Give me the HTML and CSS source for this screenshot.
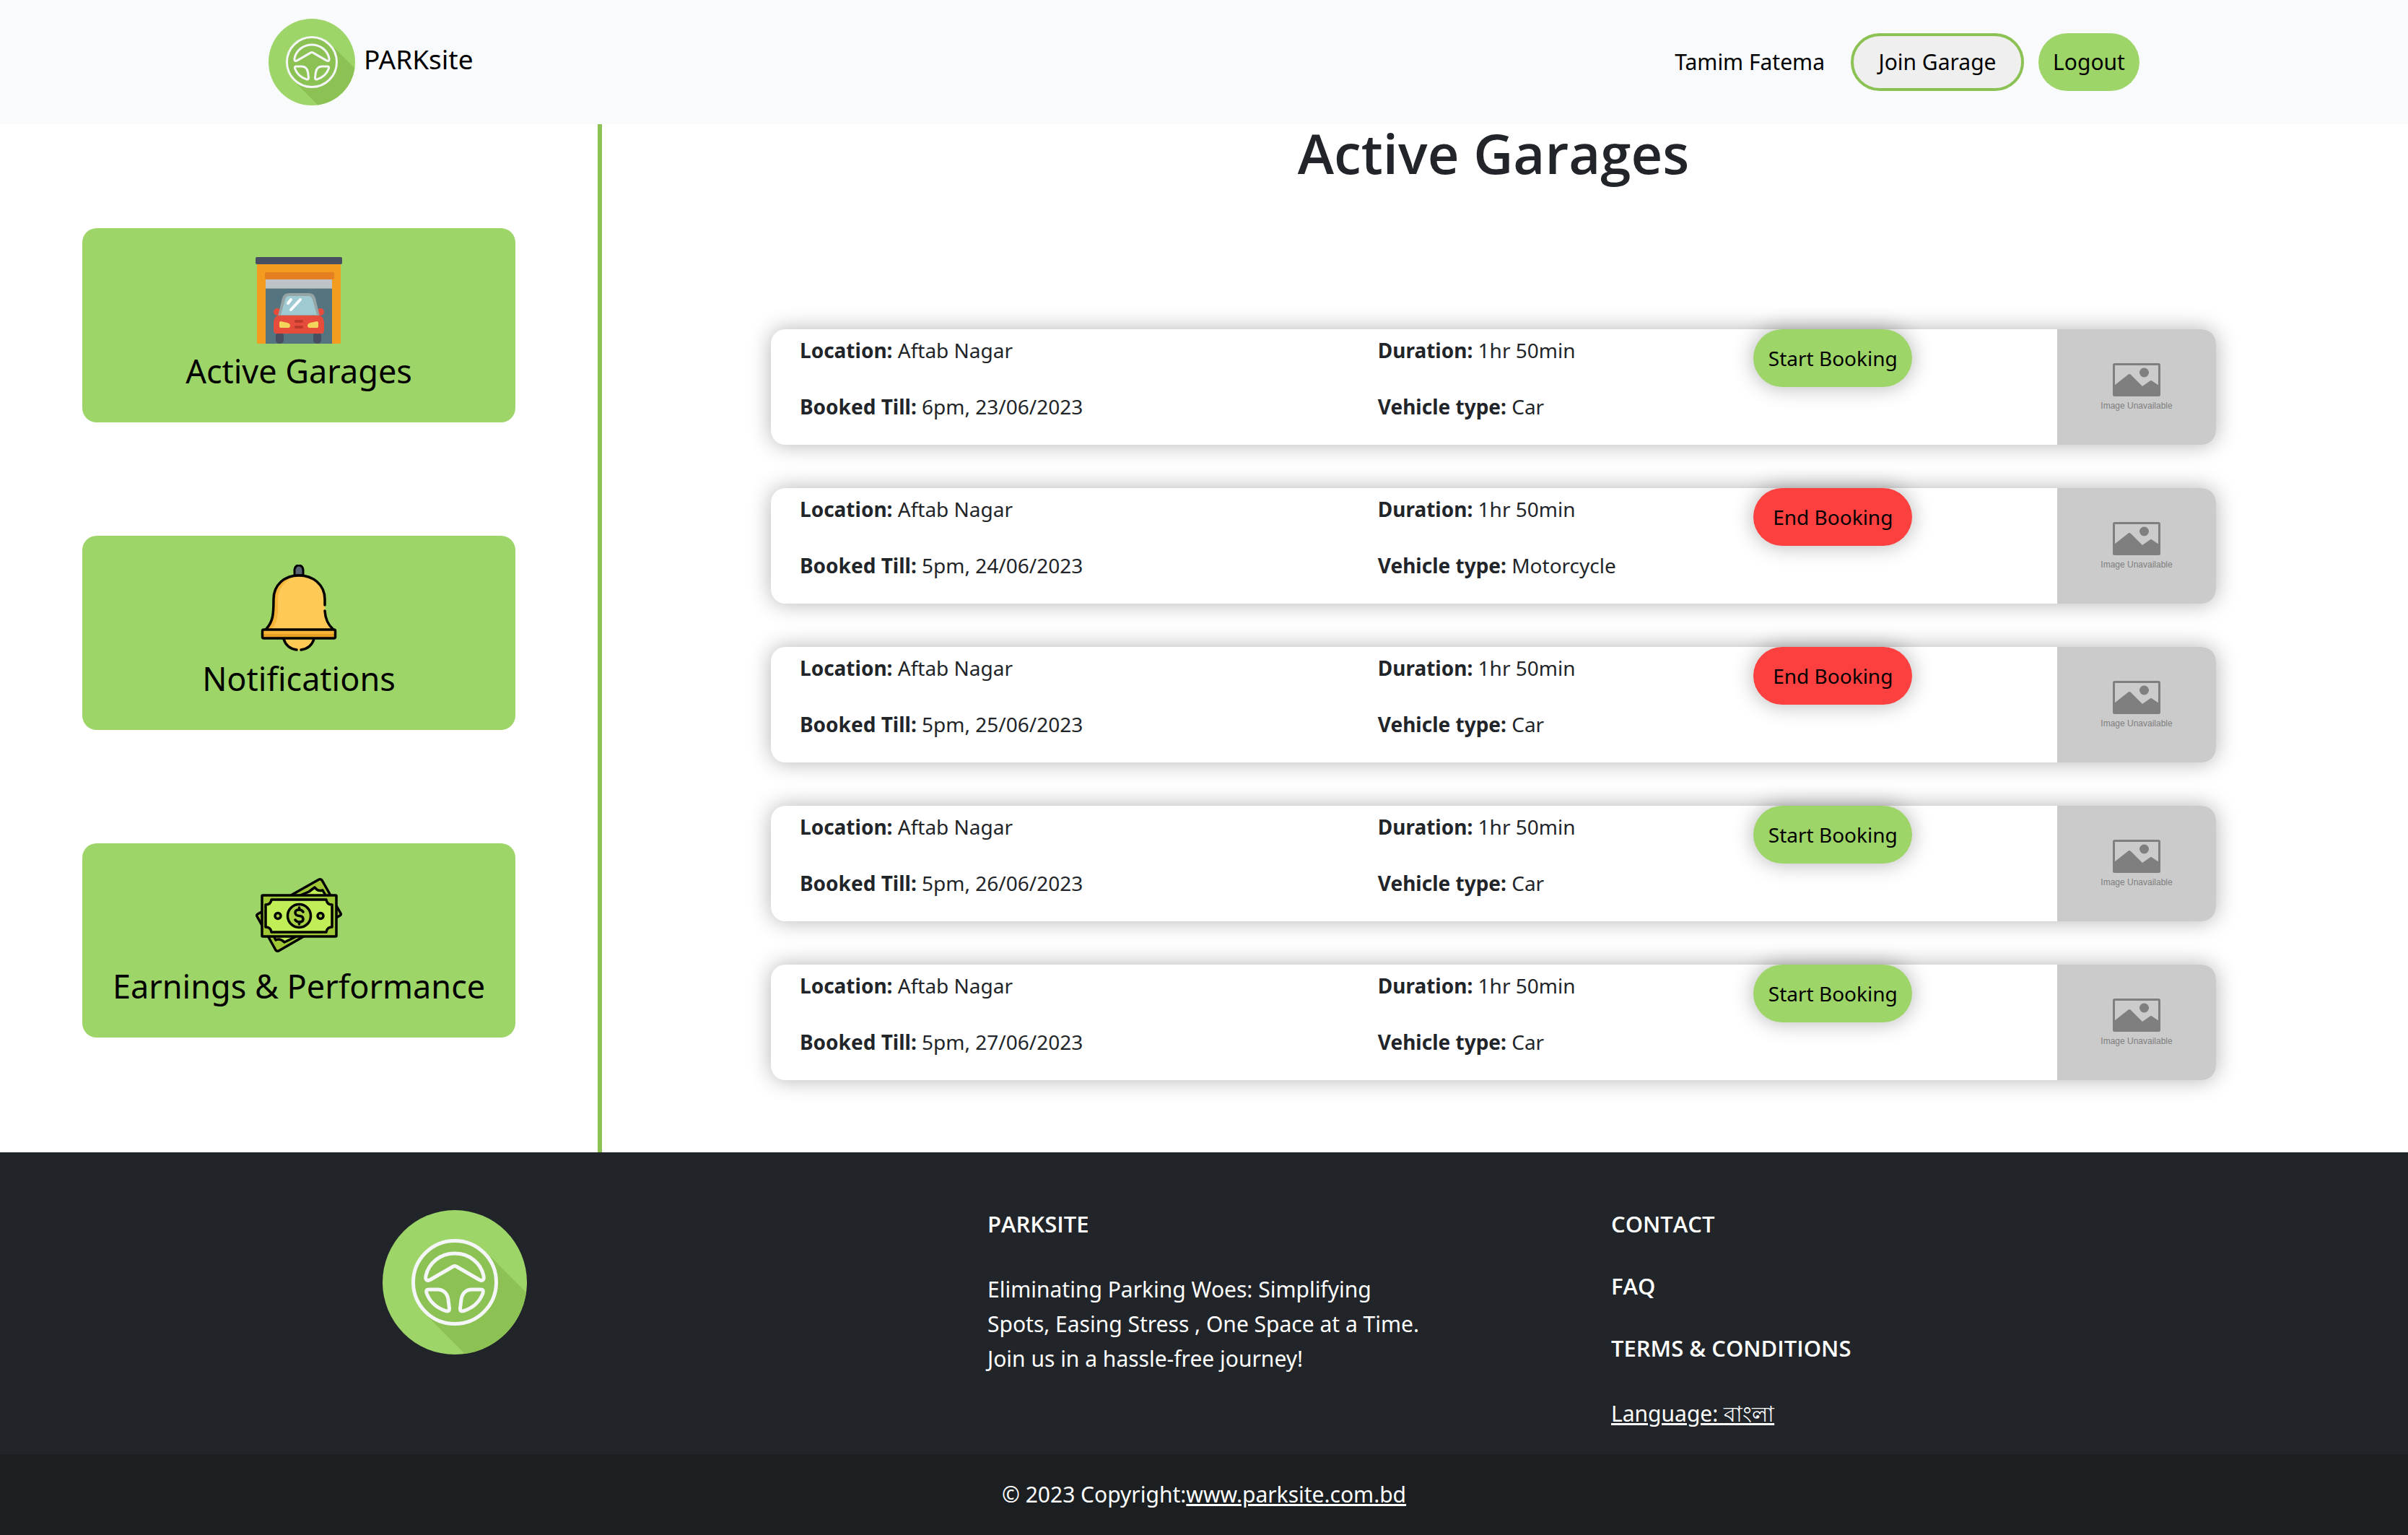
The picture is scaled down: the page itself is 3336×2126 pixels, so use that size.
FILE: index.html
```html
<!DOCTYPE html>
<html lang="en">
<head>
<meta charset="utf-8">
<title>PARKsite - Active Garages</title>
<link rel="stylesheet" href="styles.css">
</head>
<body>
<svg class="sprite" aria-hidden="true">
  <symbol id="logo" viewBox="0 0 200 200">
    <circle cx="100" cy="100" r="100" fill="#9ed569"/>
    <path d="M150 65L199 114A100 100 0 0 1 114 199L62 147Z" fill="#8bc253"/>
    <circle cx="100" cy="100" r="57.500" fill="#8bc253" stroke="#f4f6f9" stroke-width="5"/>
    <g fill="none" stroke="#f4f6f9" stroke-width="5" stroke-linejoin="round">
      <path d="M97 78.500Q100 76.500 103 78.500L134 96.500C139 99 141 96 140 91C136 73 120 60 100 60S64 73 60 91C59 96 61 99 66 96.500Z"/>
      <path d="M64 110H76C86 110 90 117 91 124L92.500 136C92.500 140 91 140.500 87 139.500C74 135 65 126 61 115C60 111 61 110 64 110Z"/>
      <path d="M136 110H124C114 110 110 117 109 124L107.500 136C107.500 140 109 140.500 113 139.500C126 135 135 126 139 115C140 111 139 110 136 110Z"/>
    </g>
  </symbol>
  <symbol id="no-image" viewBox="0 0 66 46">
    <rect x="1.500" y="1.500" width="63" height="43" rx="1" fill="none" stroke="#7f7f7f" stroke-width="3"/>
    <circle cx="43.500" cy="13" r="6.500" fill="#7f7f7f"/>
    <path d="M2 31L21 16Q23 14 25 16L41 32L51 25Q53 23 55 25L64 31V45H2Z" fill="#7f7f7f"/>
  </symbol>
</svg>

<header class="topbar">
  <a class="brand" href="#">
    <svg class="brand-logo" role="img" aria-label="PARKsite logo"><use href="#logo"/></svg>
    <span class="brand-name">PARKsite</span>
  </a>
  <nav class="account">
    <a class="account-name" href="#">Tamim Fatema</a>
    <button class="btn btn-join" type="button">Join Garage</button>
    <button class="btn btn-logout" type="button">Logout</button>
  </nav>
</header>

<div class="page">
  <nav class="sidebar">
    <a class="tile" href="#">
      <svg class="tile-icon" viewBox="0 0 120 120" aria-hidden="true">
        <rect x="2" y="8" width="116" height="112" rx="2" fill="#f39c1f"/>
        <rect x="0" y="0" width="120" height="10" rx="2" fill="#474f60"/>
        <rect x="13" y="21" width="96" height="10" rx="2" fill="#e67e22"/>
        <rect x="14" y="31" width="92" height="89" fill="#547580"/>
        <rect x="14" y="31" width="92" height="12" fill="#bdc3c7"/>
        <path d="M14 43.500H106" stroke="#95a5a5"/>
        <rect x="28" y="104" width="11" height="16" rx="5" fill="#474f60"/>
        <rect x="80" y="104" width="11" height="16" rx="5" fill="#474f60"/>
        <circle cx="30" cy="76" r="5" fill="#e64c3c"/><circle cx="90" cy="76" r="5" fill="#e64c3c"/>
        <path d="M31 82L37 57Q39 50 46 50H74Q81 50 83 57L89 82Z" fill="#95a5a5"/>
        <path d="M35 80L41 59Q42 54 46 54H73Q77 54 79 59L85 80Z" fill="#a0cad2"/>
        <path d="M45 64L49 59M49 73L62 59" stroke="#fff" stroke-width="4" stroke-linecap="round"/>
        <path d="M31 81H89Q95 83 95 92V101Q95 106 91 106H29Q25 106 25 101V92Q25 83 31 81Z" fill="#e64c3c"/>
        <path d="M35 89L44 91Q48 92 48 95Q48 98 45 98H35Q33 98 33 96V91Q33 89 35 89ZM85 89L76 91Q72 92 72 95Q72 98 75 98H85Q87 98 87 96V91Q87 89 85 89Z" fill="#f3d55b"/>
        <rect x="54" y="87" width="12" height="4" rx="2" fill="#bf392b"/><rect x="54" y="95" width="12" height="4" rx="2" fill="#bf392b"/>
      </svg>
      <span>Active Garages</span>
    </a>
    <a class="tile" href="#">
      <svg class="tile-icon" viewBox="0 0 120 120" aria-hidden="true">
        <path d="M38 102A22 17 0 0 0 82 102Z" fill="#fec955"/>
        <path d="M54 15V7Q55 1 60 1T66 7V15Z" fill="#576171" stroke="#000" stroke-width="3"/>
        <path d="M14 90C24 80 25 70 25 48C25 28 40 15 60 15S96 28 96 48C96 70 98 80 107 90Z" fill="#fec955"/>
        <path d="M16 90C25 81 26 70 26 48C26 33 36 20 50 17C38 26 31 35 31 48V65C31 75 27 84 22 90Z" fill="#f6b438"/>
        <path d="M15 89C24 79 25 70 25 48C25 28 40 15 60 15S96 28 96 48V56M96 64Q97 80 107 89" fill="none" stroke="#000" stroke-width="3.500" stroke-linecap="round"/>
        <rect x="9.500" y="90" width="101" height="12" rx="2" fill="#e8a024"/>
        <path d="M10 91H110V96H10Z" fill="#f6b438"/>
        <rect x="9.500" y="90" width="101" height="12" rx="2" fill="none" stroke="#000" stroke-width="3.500"/>
        <path d="M39 103Q43 116 57 118M81 103Q77 116 63 118" fill="none" stroke="#000" stroke-width="3.500" stroke-linecap="round"/>
      </svg>
      <span>Notifications</span>
    </a>
    <a class="tile" href="#">
      <svg class="tile-icon" viewBox="0 0 120 120" aria-hidden="true">
        <g stroke="#000" stroke-width="3.500" stroke-linejoin="round">
          <path d="M2 61Q1 59 3 58L88 10Q90 9 92 11L118 57Q119 59 117 60L32 109Q30 110 28 108Z" fill="#9fc736"/>
          <path d="M12 63Q16 58 14 52L74 27L82 21Q86 27 93 25L109 53Q105 57 106 65L40 97Q34 91 28 94Z" fill="#c1ee57"/>
          <rect x="9" y="32" width="103" height="57" rx="1" fill="#9fc736"/>
          <path d="M22 38H98Q99 45 106 45V76Q99 76 98 83H22Q21 76 14 76V45Q21 45 22 38Z" fill="#c1ee57"/>
          <circle cx="60.500" cy="60.500" r="16" fill="#a9d245"/>
          <circle cx="31" cy="60.500" r="4" fill="#a9d245"/><circle cx="90" cy="60.500" r="4" fill="#a9d245"/>
          <path d="M66 55Q64 52 60.500 52Q55 52 55 56T60.500 60.500T66 65T60.500 69Q57 69 55 66M60.500 49V52M60.500 69V72" fill="none" stroke-linecap="round"/>
        </g>
      </svg>
      <span>Earnings &amp; Performance</span>
    </a>
  </nav>

  <main class="content">
    <h1>Active Garages</h1>
    <div class="bookings">
      <article class="booking">
        <div class="info"><p><b>Location:</b> Aftab Nagar</p><p><b>Booked Till:</b> 6pm, 23/06/2023</p></div>
        <div class="info"><p><b>Duration:</b> 1hr 50min</p><p><b>Vehicle type:</b> Car</p></div>
        <div class="action"><button class="btn btn-booking start" type="button">Start Booking</button></div>
        <div class="thumb"><svg class="thumb-icon" aria-hidden="true"><use href="#no-image"/></svg><span>Image Unavailable</span></div>
      </article>
      <article class="booking">
        <div class="info"><p><b>Location:</b> Aftab Nagar</p><p><b>Booked Till:</b> 5pm, 24/06/2023</p></div>
        <div class="info"><p><b>Duration:</b> 1hr 50min</p><p><b>Vehicle type:</b> Motorcycle</p></div>
        <div class="action"><button class="btn btn-booking end" type="button">End Booking</button></div>
        <div class="thumb"><svg class="thumb-icon" aria-hidden="true"><use href="#no-image"/></svg><span>Image Unavailable</span></div>
      </article>
      <article class="booking">
        <div class="info"><p><b>Location:</b> Aftab Nagar</p><p><b>Booked Till:</b> 5pm, 25/06/2023</p></div>
        <div class="info"><p><b>Duration:</b> 1hr 50min</p><p><b>Vehicle type:</b> Car</p></div>
        <div class="action"><button class="btn btn-booking end" type="button">End Booking</button></div>
        <div class="thumb"><svg class="thumb-icon" aria-hidden="true"><use href="#no-image"/></svg><span>Image Unavailable</span></div>
      </article>
      <article class="booking">
        <div class="info"><p><b>Location:</b> Aftab Nagar</p><p><b>Booked Till:</b> 5pm, 26/06/2023</p></div>
        <div class="info"><p><b>Duration:</b> 1hr 50min</p><p><b>Vehicle type:</b> Car</p></div>
        <div class="action"><button class="btn btn-booking start" type="button">Start Booking</button></div>
        <div class="thumb"><svg class="thumb-icon" aria-hidden="true"><use href="#no-image"/></svg><span>Image Unavailable</span></div>
      </article>
      <article class="booking">
        <div class="info"><p><b>Location:</b> Aftab Nagar</p><p><b>Booked Till:</b> 5pm, 27/06/2023</p></div>
        <div class="info"><p><b>Duration:</b> 1hr 50min</p><p><b>Vehicle type:</b> Car</p></div>
        <div class="action"><button class="btn btn-booking start" type="button">Start Booking</button></div>
        <div class="thumb"><svg class="thumb-icon" aria-hidden="true"><use href="#no-image"/></svg><span>Image Unavailable</span></div>
      </article>
    </div>
  </main>
</div>

<footer class="footer">
  <div class="footer-main">
    <svg class="footer-logo" role="img" aria-label="PARKsite logo"><use href="#logo"/></svg>
    <section class="about">
      <h2>PARKSITE</h2>
      <p>Eliminating Parking Woes: Simplifying<br>Spots, Easing Stress , One Space at a Time.<br>Join us in a hassle-free journey!</p>
    </section>
    <nav class="links">
      <a class="strong" href="#">CONTACT</a>
      <a class="strong" href="#">FAQ</a>
      <a class="strong" href="#">TERMS &amp; CONDITIONS</a>
      <a class="language" href="#">Language: <span lang="bn">বাংলা</span></a>
    </nav>
  </div>
  <div class="copyright">© 2023 Copyright:<a href="#">www.parksite.com.bd</a></div>
</footer>
</body>
</html>
```
FILE: styles.css
```css
* { box-sizing: border-box; }

body {
  margin: 0;
  background: #fff;
  color: #212529;
  font: 30px/48px "Noto Sans", "Open Sans", sans-serif;
}

h1, h2, p { margin: 0; }
a { color: inherit; text-decoration: none; }
.sprite { display: none; }

/* Top bar */
.topbar {
  display: flex;
  align-items: center;
  justify-content: space-between;
  height: 172px;
  padding: 0 372px;
  background: #f8fafc;
  color: #000;
}
.brand { display: flex; align-items: center; gap: 12px; }
.brand-logo { width: 120px; height: 120px; }
.brand-name { padding-bottom: 8px; font-size: 37px; }
.account { display: flex; align-items: center; gap: 20px; }
.account-name { padding-right: 16px; }

.btn {
  height: 80px;
  padding: 0;
  border: 0;
  border-radius: 40px;
  color: #000;
  font: inherit;
}
.btn-join { width: 240px; border: 4px solid #8bc253; background: #efefef; }
.btn-logout { width: 140px; background: #9ed569; }

/* Two-column page */
.page { display: grid; grid-template-columns: 1fr 3fr; }

.sidebar {
  display: flex;
  flex-direction: column;
  align-items: center;
  gap: 157px;
  padding: 144px 0;
  border-right: 6px solid #8bc253;
}
.tile {
  display: flex;
  flex-direction: column;
  align-items: center;
  width: 600px;
  height: 269px;
  padding-top: 40px;
  border-radius: 20px;
  background: #9ed569;
  color: #000;
  font-size: 45px;
  line-height: 76px;
}
.tile-icon { width: 120px; height: 120px; }

.content { padding: 0 266px 100px 234px; }
.content h1 {
  height: 284px;
  font: 600 76px/80px "Open Sans", "Noto Sans", sans-serif;
  text-align: center;
}

/* Booking rows */
.bookings { display: grid; gap: 60px; }
.booking {
  display: grid;
  grid-template-columns: 40% 26% 1fr 220px;
  height: 160px;
  border-radius: 20px;
  background: #fff;
  box-shadow: 0 0 30px rgba(0, 0, 0, .3);
  font-size: 28px;
}
.info { padding: 5px 0 0 40px; }
.info p + p { margin-top: 30px; }
.action { padding-left: 40px; }
.btn-booking { width: 220px; box-shadow: 0 0 30px rgba(0, 0, 0, .3); }
.start { background: #9ed569; }
.end { background: #fc4040; }
.thumb {
  display: flex;
  flex-direction: column;
  align-items: center;
  gap: 5px;
  padding-top: 47px;
  border-radius: 0 20px 20px 0;
  background: #cbcbcb;
  color: #7f7f7f;
  font: 12px/16px "Liberation Sans", sans-serif;
}
.thumb-icon { width: 66px; height: 46px; }

/* Footer */
.footer { background: #212529; color: #fff; }
.footer-main {
  display: grid;
  grid-template-columns: 838fr 864fr 732fr;
  height: 418px;
  padding: 80px 372px 0 530px;
}
.footer-logo { width: 200px; height: 200px; }
.footer h2, .strong { font: 600 31px/38px "Open Sans", "Noto Sans", sans-serif; }
.about h2 { margin-bottom: 48px; }
.links { display: flex; flex-direction: column; align-items: flex-start; gap: 48px; }
.language, .copyright a { text-decoration: underline; }
.copyright { height: 112px; background: #1b1f22; line-height: 112px; text-align: center; }
```
